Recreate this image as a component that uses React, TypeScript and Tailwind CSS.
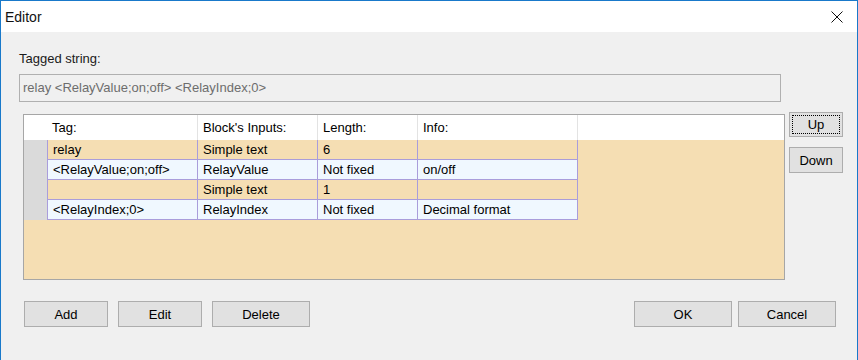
const ROWS = [
  { tag: "relay", input: "Simple text", length: "6", info: "", bg: "bg-[#f5deb3]" },
  { tag: "<RelayValue;on;off>", input: "RelayValue", length: "Not fixed", info: "on/off", bg: "bg-[#f0f8ff]" },
  { tag: "", input: "Simple text", length: "1", info: "", bg: "bg-[#f5deb3]" },
  { tag: "<RelayIndex;0>", input: "RelayIndex", length: "Not fixed", info: "Decimal format", bg: "bg-[#f0f8ff]" },
];

function Button({ label, width, height = "h-[26px]", focused = false }: { label: string; width: string; height?: string; focused?: boolean }) {
  return (
    <button
      className={`${width} ${height} flex items-center justify-center bg-[#e1e1e1] border border-[#adadad] text-[13px] leading-[15px] text-black ${
        focused ? "outline-1 outline-dotted outline-black outline-offset-[-4px]" : ""
      }`}
    >
      {label}
    </button>
  );
}

export default function App() {
  return (
    <div className="w-[858px] h-[360px] flex flex-col bg-[#f0f0f0] border border-b-0 border-[#1979ca] font-['Liberation_Sans',Arial,sans-serif] text-black overflow-hidden">
      {/* Title bar */}
      <div className="h-[31px] shrink-0 bg-white flex items-center justify-between pl-[4px] pr-[14px]">
        <span className="text-[14px] leading-[16px] text-[#111]">Editor</span>
        <svg width="12" height="12" viewBox="0 0 12 12">
          <path d="M0.5 0.5 L11.5 11.5 M11.5 0.5 L0.5 11.5" stroke="#111" strokeWidth="1" fill="none" />
        </svg>
      </div>

      {/* Body */}
      <div className="flex-1 flex flex-col pl-[18px]">
        <div className="mt-[19px] text-[13px] leading-[15px] text-[#1a1a1a]">Tagged string:</div>
        <div className="mt-[8px] w-[762px] h-[28px] border border-[#b0b0b0] bg-[#f0f0f0] flex items-center pl-[3px] pb-[1px] text-[13px] leading-[15px] text-[#6d6d6d]">
          relay &lt;RelayValue;on;off&gt; &lt;RelayIndex;0&gt;
        </div>

        <div className="mt-[10px] flex items-start">
          {/* Grid */}
          <div className="ml-[4px] mt-[2px] w-[762px] h-[166px] border border-[#a6a6a6] flex flex-col bg-[#f5deb3] text-[13px] leading-[15px]">
            <div className="h-[25px] shrink-0 bg-white flex">
              <div className="w-[23px]" />
              <div className="w-[150px] flex items-center pl-[5px]">Tag:</div>
              <div className="w-[120px] border-l border-[#e3e3e3] flex items-center pl-[5px]">Block's Inputs:</div>
              <div className="w-[100px] border-l border-[#e3e3e3] flex items-center pl-[5px]">Length:</div>
              <div className="w-[161px] border-l border-r border-[#e3e3e3] flex items-center pl-[5px]">Info:</div>
            </div>
            {ROWS.map((r, i) => (
              <div key={i} className="h-[20px] flex">
                <div className="w-[23px] bg-[#dadada]" />
                <div className={`w-[150px] ${r.bg} border-l border-b border-[#a99ddb] flex items-center pl-[5px]`}>{r.tag}</div>
                <div className={`w-[120px] ${r.bg} border-l border-b border-[#a99ddb] flex items-center pl-[5px]`}>{r.input}</div>
                <div className={`w-[100px] ${r.bg} border-l border-b border-[#a99ddb] flex items-center pl-[5px]`}>{r.length}</div>
                <div className={`w-[161px] ${r.bg} border-l border-r border-b border-[#a99ddb] flex items-center pl-[5px]`}>{r.info}</div>
              </div>
            ))}
          </div>

          {/* Side buttons */}
          <div className="ml-[4px] flex flex-col gap-[10px]">
            <Button label="Up" width="w-[54px]" height="h-[25px]" focused />
            <Button label="Down" width="w-[54px]" />
          </div>
        </div>

        {/* Bottom buttons */}
        <div className="mt-[21px] flex mr-[21px]">
          <div className="ml-[5px] flex gap-[10px]">
            <Button label="Add" width="w-[84px]" />
            <Button label="Edit" width="w-[84px]" />
            <Button label="Delete" width="w-[98px]" />
          </div>
          <div className="flex-1" />
          <div className="flex gap-[6px]">
            <Button label="OK" width="w-[98px]" />
            <Button label="Cancel" width="w-[98px]" />
          </div>
        </div>
      </div>
    </div>
  );
}
